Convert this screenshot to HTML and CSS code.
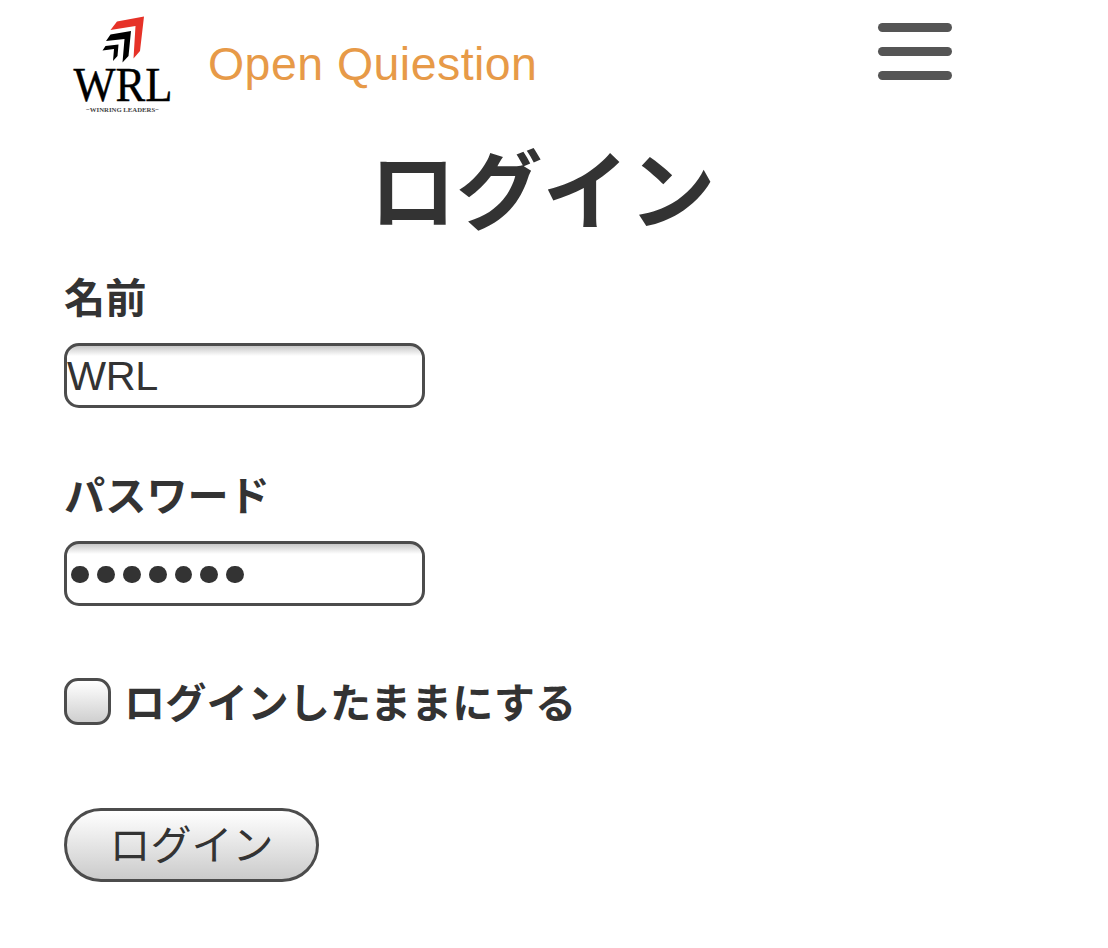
FILE: index.html
```html
<!DOCTYPE html>
<html lang="ja">
<head>
<meta charset="utf-8">
<title>ログイン</title>
<link rel="stylesheet" href="styles.css">
</head>
<body>
<header class="header">
  <svg class="logo" viewBox="0 0 125 115" role="img" aria-label="WRL Winring Leaders">
    <path fill="#e63228" d="M57 16.500 84 11.500 80 46 73.500 53.500 75.500 21 50.500 25Z"/>
    <path fill="#000" d="M50.500 29.500 71 26 68.500 51 62.500 57.500 64.500 34 46 36Z"/>
    <path fill="#000" d="M45.500 41 58.500 39.500 57.500 51 53 56 54 44 42.500 45.500Z"/>
    <text class="logo-name" x="13.500" y="95.500" textLength="99" lengthAdjust="spacingAndGlyphs">WRL</text>
    <text class="logo-tag" x="26" y="106.500" textLength="73" lengthAdjust="spacingAndGlyphs">−WINRING LEADERS−</text>
  </svg>
  <a class="brand">Open Quiestion</a>
  <div class="menu"><i class="bar"></i><i class="bar"></i><i class="bar"></i></div>
</header>
<main class="main">
  <h1 class="title">ログイン</h1>
  <form class="form">
    <label class="label" for="name">名前</label>
    <input class="field" id="name" type="text" value="WRL">
    <label class="label label-password">パスワード</label>
    <div class="field field-password"><i class="dot"></i><i class="dot"></i><i class="dot"></i><i class="dot"></i><i class="dot"></i><i class="dot"></i><i class="dot"></i></div>
    <label class="remember"><input class="check" type="checkbox"><span class="remember-text">ログインしたままにする</span></label>
    <button class="submit" type="button">ログイン</button>
  </form>
</main>
</body>
</html>
```
FILE: styles.css
```css
* { box-sizing: border-box; }
body {
  margin: 0;
  height: 948px;
  overflow: hidden;
  background: #fff;
  color: #333;
  font-family: "Liberation Sans", "Noto Sans CJK JP", sans-serif;
}
.header { display: flex; align-items: flex-start; height: 128px; padding-left: 60px; }
.logo { width: 125px; height: 115px; margin-top: 5px; flex: none; }
.logo-name { font: 48.500px "Liberation Serif", serif; stroke: #000; stroke-width: .4px; }
.logo-tag { font: bold 7px "Liberation Serif", serif; fill: #444; }
.brand {
  width: 330px;
  margin: 36px 0 0 23px;
  color: #e79a48;
  font-size: 46.500px;
  letter-spacing: .45px;
  line-height: 56px;
  white-space: nowrap;
}
.menu { display: flex; flex-direction: column; gap: 15px; margin: 23px 0 0 340px; }
.bar { width: 74px; height: 9px; border-radius: 5px; background: #555; }
.main { padding: 0 64px; }
.title {
  width: 957px;
  height: 138px;
  margin: 0;
  font-size: 86.500px;
  line-height: 130px;
  text-align: center;
  font-weight: 700;
}
.form { display: flex; flex-direction: column; align-items: flex-start; }
.label { height: 77px; font-size: 41.200px; line-height: 66px; font-weight: 700; }
.label-password { margin-top: 56px; }
.field {
  width: 361px;
  height: 65px;
  margin: 0;
  padding: 2px 0 0;
  border: 3px solid #4c4c4c;
  border-radius: 15px;
  background: linear-gradient(#c8c8c8, #fff 10px);
  color: #333;
  font: 41.400px "Liberation Sans", sans-serif;
  letter-spacing: -.4px;
  outline: 0;
}
.field-password { display: flex; align-items: center; gap: 8px; padding-left: 4px; }
.dot { width: 17.900px; height: 17.900px; border-radius: 50%; background: #333; }
.remember { display: flex; align-items: center; gap: 13px; height: 60px; margin-top: 65px; font-size: 41.200px; font-weight: 700; line-height: 60px; }
.remember-text { padding-top: 5px; }
.check {
  appearance: none;
  width: 47px;
  height: 47px;
  margin: 0;
  border: 3px solid #4c4c4c;
  border-radius: 14px;
  background: linear-gradient(#fff, #cfcfcf);
}
.submit {
  width: 255px;
  height: 74px;
  margin: 77px 0 0;
  padding: 0 0 6px;
  border: 3px solid #4c4c4c;
  border-radius: 37px;
  background: linear-gradient(#fff, #cbcbcb);
  color: #333;
  font: 41px/62px "Noto Sans CJK JP", sans-serif;
}
```
